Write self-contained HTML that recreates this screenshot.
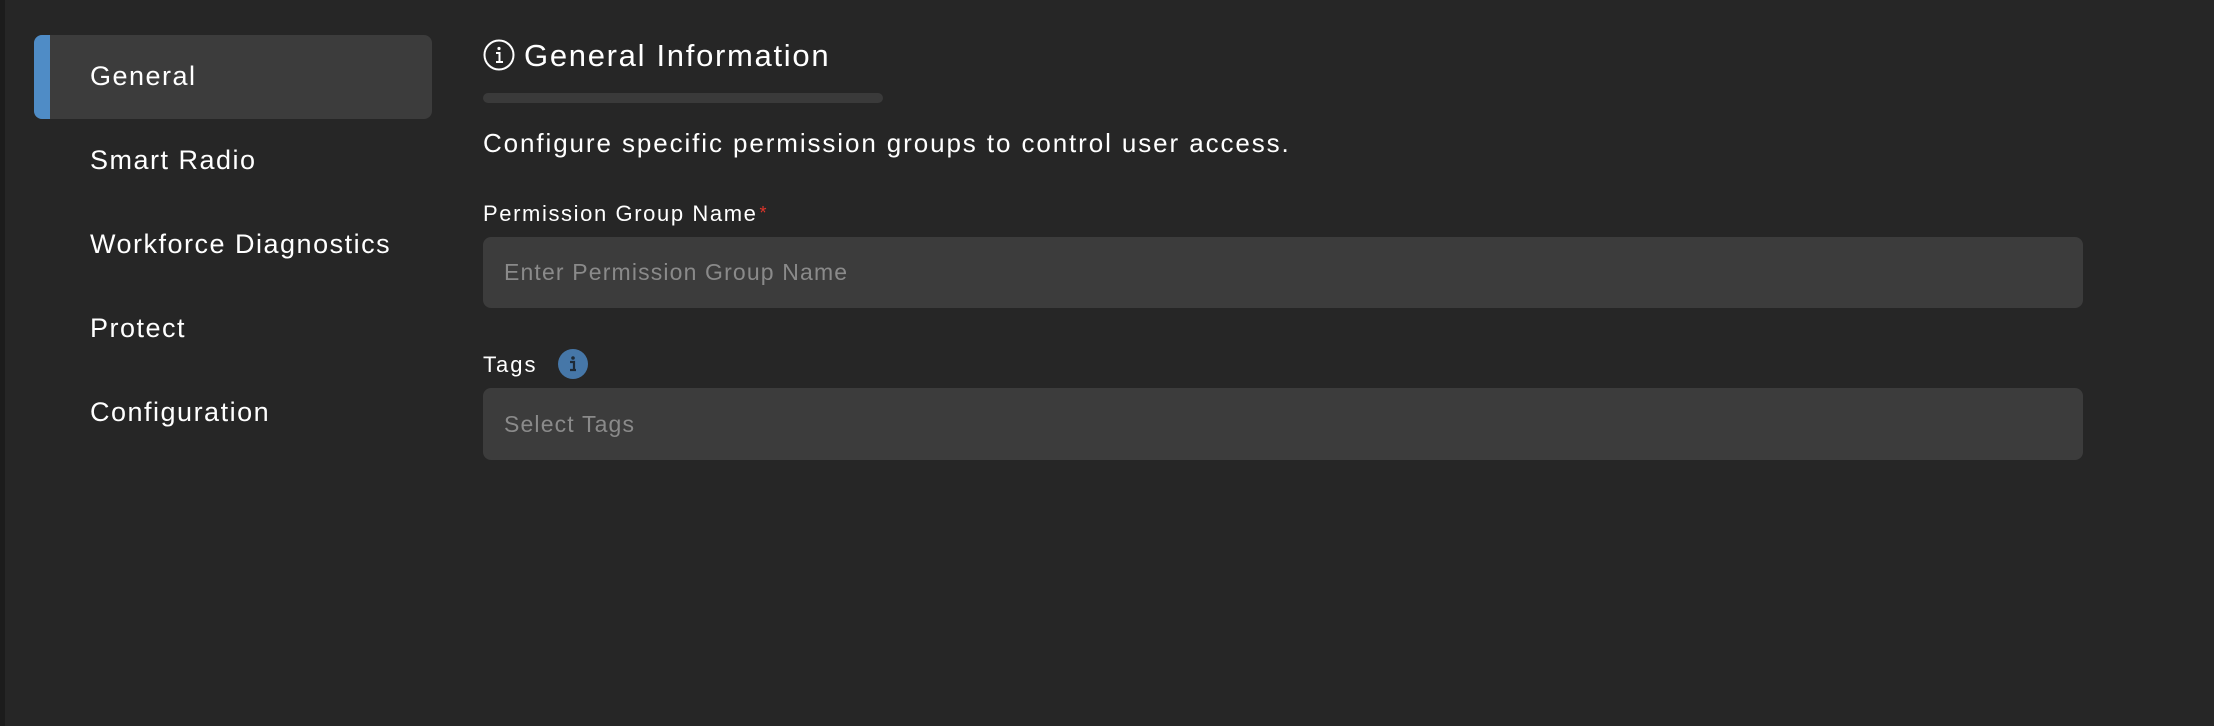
<!DOCTYPE html>
<html><head><style>
*{margin:0;padding:0;box-sizing:border-box}
body{width:2214px;height:726px;background:#262626;font-family:"Liberation Sans",sans-serif;color:#fff;position:relative;overflow:hidden}
.strip{position:absolute;left:0;top:0;width:5px;height:726px;background:#1c1c1c}
.active{position:absolute;left:34px;top:35px;width:398px;height:84px;background:#3c3c3c;border-radius:8px;overflow:hidden}
.active:before{content:"";position:absolute;left:0;top:0;width:16px;height:100%;background:#4f8cc6}
.nav{position:absolute;left:90px;font-size:27px;line-height:34px;color:#fff;letter-spacing:1.5px}
.t{position:absolute;white-space:nowrap}
.inp{position:absolute;left:483px;width:1600px;height:71px;background:#3c3c3c;border-radius:8px;color:#8a8a8a;font-size:23px;line-height:71px;padding-left:21px;letter-spacing:1.15px}
</style></head><body>
<div class="strip"></div>
<div class="active"></div>
<div class="nav" style="top:59px">General</div>
<div class="nav" style="top:143px">Smart Radio</div>
<div class="nav" style="top:227px">Workforce Diagnostics</div>
<div class="nav" style="top:311px">Protect</div>
<div class="nav" style="top:395px">Configuration</div>
<svg style="position:absolute;left:483px;top:39px" width="32" height="32" viewBox="0 0 32 32"><circle cx="16" cy="16" r="14.5" fill="none" stroke="#fff" stroke-width="2"/><circle cx="16" cy="9.5" r="1.6" fill="#fff"/><path d="M13 14h3.5v9M13 23h7" stroke="#fff" stroke-width="2" fill="none"/></svg>
<div class="t" style="left:524px;top:37px;font-size:31px;line-height:38px;letter-spacing:1.7px">General Information</div>
<div style="position:absolute;left:483px;top:93px;width:400px;height:10px;background:#3a3a3a;border-radius:5px"></div>
<div class="t" style="left:483px;top:127px;font-size:26px;line-height:32px;letter-spacing:1.9px">Configure specific permission groups to control user access.</div>
<div class="t" style="left:483px;top:200px;font-size:22px;line-height:27px;letter-spacing:1.6px">Permission Group Name<span style="color:#e0352b;font-size:18px;vertical-align:top;margin-left:2px">*</span></div>
<div class="inp" style="top:237px">Enter Permission Group Name</div>
<div class="t" style="left:483px;top:351px;font-size:22px;line-height:27px;letter-spacing:2px">Tags</div>
<svg style="position:absolute;left:558px;top:349px" width="30" height="30" viewBox="0 0 30 30"><circle cx="15" cy="15" r="15" fill="#4677a8"/><circle cx="15" cy="9" r="1.8" fill="#1e2a36"/><path d="M12 13h4v8M12 21h6" stroke="#1e2a36" stroke-width="2.2" fill="none"/></svg>
<div class="inp" style="top:388px;height:72px;line-height:72px">Select Tags</div>
</body></html>
